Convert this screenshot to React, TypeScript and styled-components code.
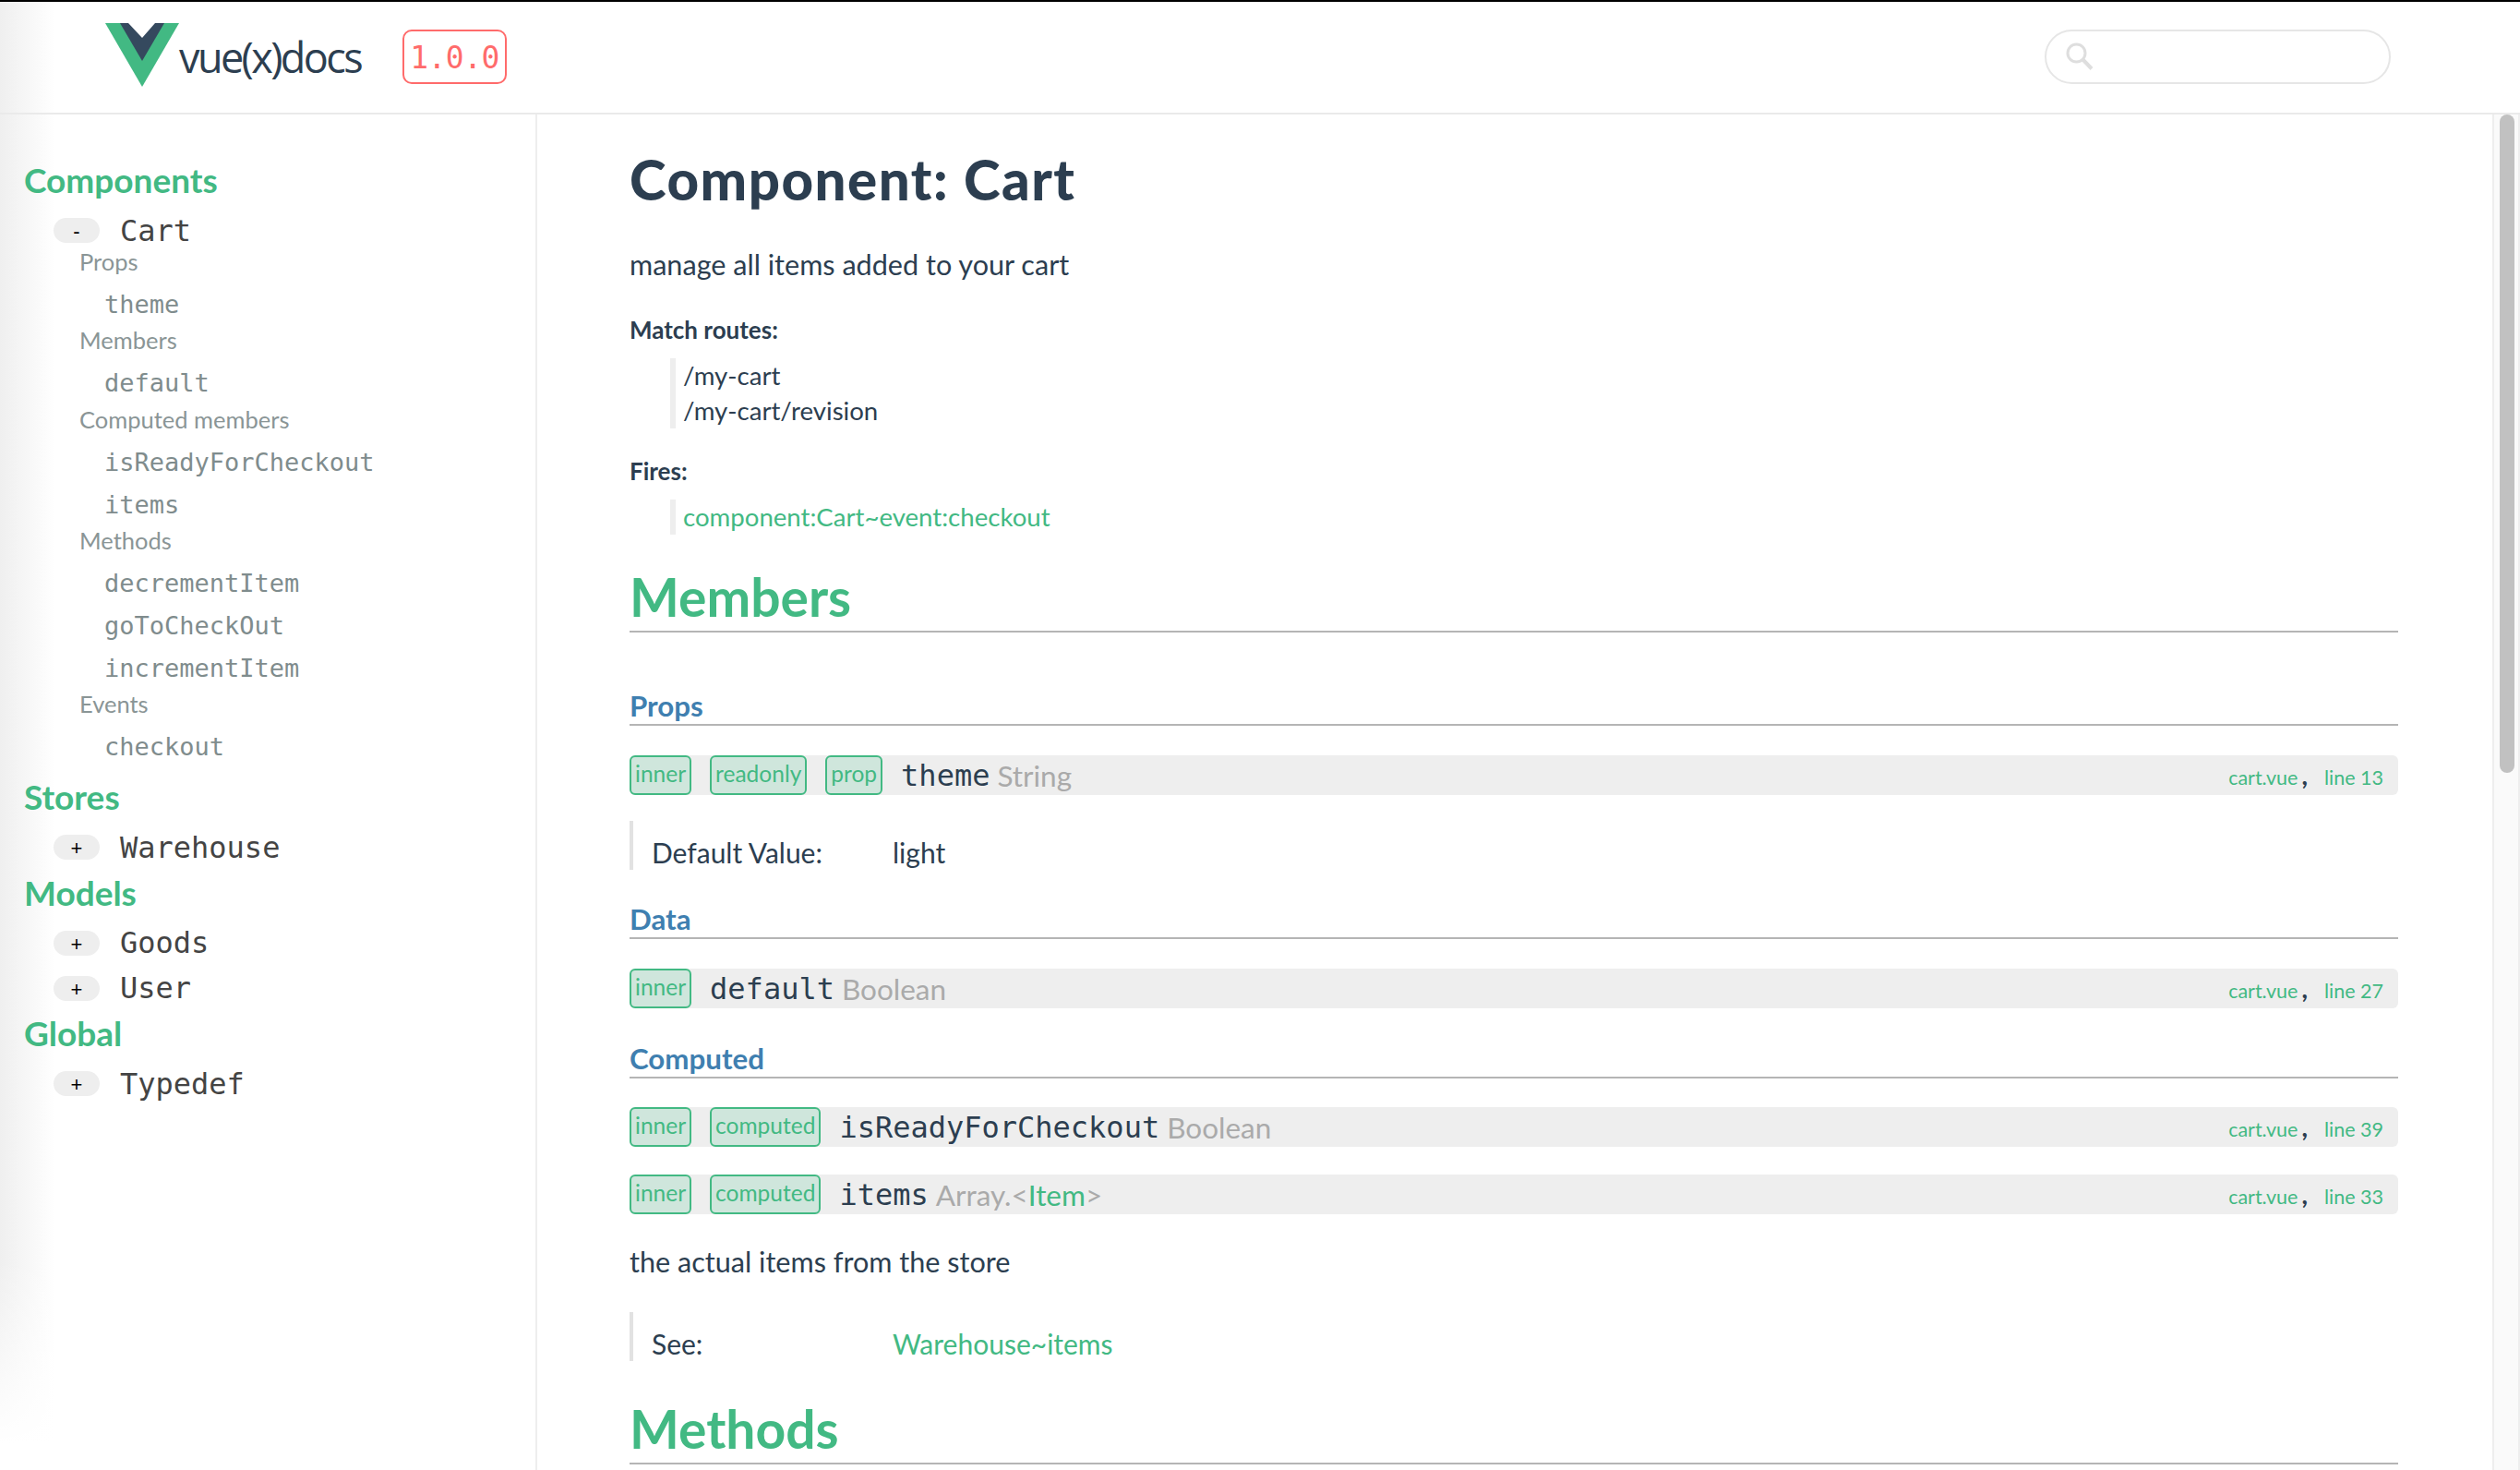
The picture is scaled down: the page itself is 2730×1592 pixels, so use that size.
import { createGlobalStyle, styled } from "styled-components";

const GREEN = "#42b983";
const INK = "#2c3e50";
const SANS = `"Lato", "Open Sans", sans-serif`;
const MONO = `"DejaVu Sans Mono", "Liberation Mono", monospace`;

const Global = createGlobalStyle`
  html, body {
    margin: 0;
    padding: 0;
    height: 100%;
    overflow: hidden;
    background: #fff;
  }
  body {
    font-family: ${SANS};
    color: ${INK};
  }
  * {
    box-sizing: border-box;
  }
`;

const Page = styled.div`
  display: flex;
  flex-direction: column;
  height: 1592px;
  border-top: 2px solid #000;
`;

const Header = styled.header`
  display: flex;
  align-items: center;
  flex: none;
  height: 122px;
  padding: 0 140px 2px 114px;
  border-bottom: 2px solid #eaeaea;
  background: linear-gradient(to right, #efefef, #fff 60px);
`;

const Brand = styled.div`
  display: flex;
  align-items: flex-end;
  width: 278px;
  height: 70px;
`;

const BrandName = styled.span`
  margin: 0 0 9px 0;
  font-family: "Open Sans", sans-serif;
  font-size: 45px;
  font-weight: 400;
  line-height: 50px;
  letter-spacing: -2.6px;
  color: ${INK};
`;

const Version = styled.span`
  display: flex;
  align-items: center;
  justify-content: center;
  width: 113px;
  height: 59px;
  margin-left: 44px;
  padding-top: 2px;
  border: 2px solid #ff6b6b;
  border-radius: 10px;
  font-family: ${MONO};
  font-size: 33px;
  letter-spacing: -0.6px;
  color: #ff6b6b;
`;

const Search = styled.div`
  display: flex;
  align-items: center;
  width: 375px;
  height: 59px;
  margin-left: auto;
  padding-left: 21px;
  border: 2px solid #e6e6e6;
  border-radius: 30px;
`;

const Body = styled.div`
  display: flex;
  flex: 1;
  min-height: 0;
`;

const Sidebar = styled.nav`
  flex: none;
  width: 582px;
  padding: 46px 0 0 26px;
  border-right: 2px solid #eee;
  background:
    linear-gradient(to bottom, rgba(255, 255, 255, 0) 1240px, #fff 1440px),
    linear-gradient(to right, #efefef, #fff 60px);
`;

const NavGroupBox = styled.section`
  & + & {
    margin-top: 6px;
  }
`;

const NavHeading = styled.h3`
  margin: 0 0 11.5px;
  font-size: 37px;
  font-weight: 700;
  line-height: 50px;
  color: ${GREEN};
`;

const Module = styled.div`
  display: flex;
  align-items: center;
  height: 36px;
  padding-left: 32px;
  font-family: ${MONO};
  font-size: 32px;
  color: #444;

  & + & {
    margin-top: 13px;
  }
`;

const Toggle = styled.span`
  display: flex;
  align-items: center;
  justify-content: center;
  width: 50px;
  height: 27px;
  margin-right: 22px;
  padding-top: 3px;
  border-radius: 14px;
  background: #eee;
  font-family: "Liberation Sans", sans-serif;
  font-size: 22px;
  color: #000;
`;

const SubLabel = styled.div`
  height: 29px;
  margin: 1.4px 0 9px 60px;
  font-size: 25.5px;
  line-height: 29px;
  color: #8a9596;
`;

const SubLink = styled.div`
  height: 46px;
  margin-left: 87px;
  font-family: ${MONO};
  font-size: 27px;
  line-height: 46px;
  color: #7f8c8d;
`;

const Main = styled.main`
  flex: 1;
  min-width: 0;
  padding: 0 102px 0 100px;
  overflow: hidden;
`;

const Title = styled.h1`
  margin: 35px 0 0;
  font-size: 60px;
  font-weight: 900;
  line-height: 70px;
  letter-spacing: 1.5px;
`;

const Text = styled.p<{ $top: number }>`
  margin: ${(p) => p.$top}px 0 0;
  font-size: 30.6px;
  line-height: 40px;
`;

const Label = styled.h5<{ $top: number }>`
  margin: ${(p) => p.$top}px 0 0;
  font-size: 26px;
  font-weight: 700;
  line-height: 34px;
`;

const Quote = styled.div`
  margin: 14px 0 0 44px;
  padding-left: 8px;
  border-left: 6px solid #eee;
  font-size: 27.6px;
  line-height: 38px;
`;

const Link = styled.a`
  color: ${GREEN};
`;

const Section = styled.h2<{ $top: number }>`
  margin: ${(p) => p.$top}px 0 0;
  padding-bottom: 2px;
  border-bottom: 2px solid #b5b5b5;
  font-size: 57px;
  font-weight: 700;
  line-height: 70px;
  color: ${GREEN};
`;

const Group = styled.h4<{ $top: number }>`
  margin: ${(p) => p.$top}px 0 0;
  border-bottom: 2px solid #b5b5b5;
  font-size: 31.3px;
  font-weight: 700;
  line-height: 40px;
  color: #3f7fb0;
`;

const Row = styled.div<{ $top: number }>`
  display: flex;
  align-items: center;
  height: 43px;
  margin-top: ${(p) => p.$top}px;
  padding-right: 16px;
  border-radius: 6px;
  background: #eee;
`;

const Badge = styled.span`
  flex: none;
  height: 43px;
  margin-right: 20px;
  padding: 0 4px;
  border: 2px solid ${GREEN};
  border-radius: 6px;
  background: #cfe6dc;
  font-size: 24.5px;
  line-height: 36px;
  color: ${GREEN};
`;

const Name = styled.span`
  font-family: ${MONO};
  font-size: 32px;
  color: ${INK};
`;

const TypeName = styled.span`
  margin-left: 8px;
  font-size: 31.5px;
  color: #aaa;
`;

const Source = styled.span`
  display: flex;
  align-items: baseline;
  margin: -2px 0 0 auto;
  font-size: 21.5px;
  color: ${GREEN};
`;

const Comma = styled.span`
  margin: 0 18px 0 4px;
  font-size: 28px;
  font-weight: 700;
  color: ${INK};
`;

const Detail = styled.div<{ $top: number }>`
  display: flex;
  align-items: center;
  height: 53px;
  margin-top: ${(p) => p.$top}px;
  padding: 14px 0 0 20px;
  border-left: 4px solid #e2e2e2;
  font-size: 30px;
`;

const DetailKey = styled.span`
  width: 261px;
`;

const ScrollTrack = styled.div`
  flex: none;
  width: 30px;
  padding: 0 4px 0 6px;
  border-left: 2px solid #eee;
  border-right: 2px solid #eee;
  background: #fafafa;
`;

const ScrollThumb = styled.div`
  height: 713px;
  border-radius: 8px;
  background: #c1c1c1;
`;

type NavGroup = { label: string; links: string[] };

const cartGroups: NavGroup[] = [
  { label: "Props", links: ["theme"] },
  { label: "Members", links: ["default"] },
  { label: "Computed members", links: ["isReadyForCheckout", "items"] },
  { label: "Methods", links: ["decrementItem", "goToCheckOut", "incrementItem"] },
  { label: "Events", links: ["checkout"] },
];

const navBottom = [
  { heading: "Stores", modules: ["Warehouse"] },
  { heading: "Models", modules: ["Goods", "User"] },
  { heading: "Global", modules: ["Typedef"] },
];

const Logo = () => (
  <svg width="80" height="70" viewBox="0 0 80 70" style={{ marginBottom: 1, flex: "none" }}>
    <polygon points="0,0 80,0 40,69" fill="#42b983" />
    <polygon points="16,0 64,0 40,41" fill="#35495e" />
    <polygon points="25,0 54,0 40,16" fill="#fff" />
  </svg>
);

const SearchIcon = () => (
  <svg width="30" height="30" viewBox="0 0 30 30" fill="none" stroke="#dedede">
    <circle cx="11.5" cy="11.5" r="9.5" strokeWidth="3" />
    <line x1="18" y1="18" x2="28" y2="28.5" strokeWidth="4" />
  </svg>
);

type Member = {
  top: number;
  badges: string[];
  name: string;
  type: React.ReactNode;
  line: number;
};

const MemberRow = ({ top, badges, name, type, line }: Member) => (
  <Row $top={top}>
    {badges.map((b) => (
      <Badge key={b}>{b}</Badge>
    ))}
    <Name>{name}</Name>
    <TypeName>{type}</TypeName>
    <Source>
      cart.vue<Comma>,</Comma>line {line}
    </Source>
  </Row>
);

export default function App() {
  return (
    <Page>
      <Global />
      <Header>
        <Brand>
          <Logo />
          <BrandName>vue(x)docs</BrandName>
        </Brand>
        <Version>1.0.0</Version>
        <Search>
          <SearchIcon />
        </Search>
      </Header>
      <Body>
        <Sidebar>
          <NavGroupBox>
            <NavHeading>Components</NavHeading>
            <Module>
              <Toggle>-</Toggle>Cart
            </Module>
            {cartGroups.map((g) => (
              <div key={g.label}>
                <SubLabel>{g.label}</SubLabel>
                {g.links.map((l) => (
                  <SubLink key={l}>{l}</SubLink>
                ))}
              </div>
            ))}
          </NavGroupBox>
          {navBottom.map((g) => (
            <NavGroupBox key={g.heading}>
              <NavHeading>{g.heading}</NavHeading>
              {g.modules.map((m) => (
                <Module key={m}>
                  <Toggle>+</Toggle>
                  {m}
                </Module>
              ))}
            </NavGroupBox>
          ))}
        </Sidebar>
        <Main>
          <Title>Component: Cart</Title>
          <Text $top={38}>manage all items added to your cart</Text>
          <Label $top={33}>Match routes:</Label>
          <Quote>
            /my-cart
            <br />
            /my-cart/revision
          </Quote>
          <Label $top={29}>Fires:</Label>
          <Quote>
            <Link>component:Cart~event:checkout</Link>
          </Quote>

          <Section $top={32}>Members</Section>
          <Group $top={59}>Props</Group>
          <MemberRow
            top={32}
            badges={["inner", "readonly", "prop"]}
            name="theme"
            type="String"
            line={13}
          />
          <Detail $top={28}>
            <DetailKey>Default Value:</DetailKey>light
          </Detail>

          <Group $top={33}>Data</Group>
          <MemberRow top={32} badges={["inner"]} name="default" type="Boolean" line={27} />

          <Group $top={34}>Computed</Group>
          <MemberRow
            top={31}
            badges={["inner", "computed"]}
            name="isReadyForCheckout"
            type="Boolean"
            line={39}
          />
          <MemberRow
            top={30}
            badges={["inner", "computed"]}
            name="items"
            type={
              <>
                Array.&lt;<Link>Item</Link>&gt;
              </>
            }
            line={33}
          />
          <Text $top={32}>the actual items from the store</Text>
          <Detail $top={34}>
            <DetailKey>See:</DetailKey>
            <Link>Warehouse~items</Link>
          </Detail>

          <Section $top={38}>Methods</Section>
        </Main>
        <ScrollTrack>
          <ScrollThumb />
        </ScrollTrack>
      </Body>
    </Page>
  );
}
